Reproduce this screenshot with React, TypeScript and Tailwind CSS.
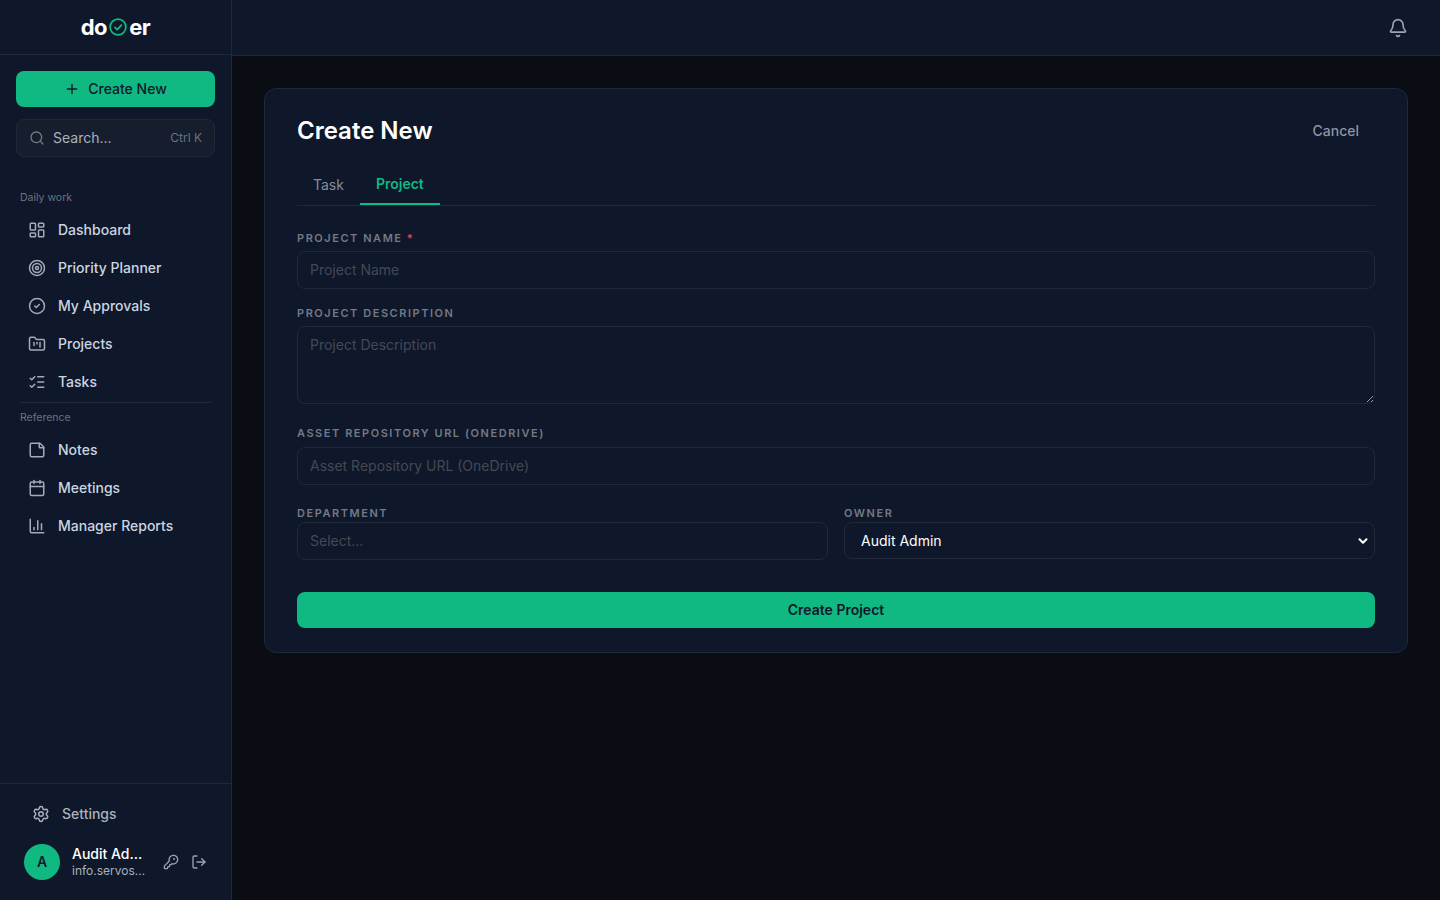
import { ReactNode } from "react";
import {
  Bell,
  Calendar,
  ChartColumn,
  ChevronDown,
  CircleCheck,
  FolderKanban,
  KeyRound,
  LayoutDashboard,
  ListChecks,
  LogOut,
  Plus,
  Search,
  Settings,
  StickyNote,
  Target,
} from "lucide-react";

const dailyWork = [
  { label: "Dashboard", icon: LayoutDashboard },
  { label: "Priority Planner", icon: Target },
  { label: "My Approvals", icon: CircleCheck },
  { label: "Projects", icon: FolderKanban },
  { label: "Tasks", icon: ListChecks },
];

const reference = [
  { label: "Notes", icon: StickyNote },
  { label: "Meetings", icon: Calendar },
  { label: "Manager Reports", icon: ChartColumn },
];

const NavItem = ({ label, icon: Icon }: { label: string; icon: typeof Bell }) => (
  <a className="flex h-[38px] items-center gap-[12px] rounded-lg px-[12px] text-sm font-medium text-[#cbd5e1]">
    <Icon className="h-[18px] w-[18px] shrink-0 text-[#a3abb8]" strokeWidth={2} />
    {label}
  </a>
);

const FieldLabel = ({ children }: { children: ReactNode }) => (
  <label className="block text-[11px] leading-[13px] font-semibold tracking-[0.14em] text-[#727a87] uppercase">
    {children}
  </label>
);

const inputClass =
  "block w-full rounded-lg border border-[#1f2937] bg-transparent pl-3 text-sm text-[#e5e7eb] outline-none placeholder:text-[#434a54]";

export default function App() {
  return (
    <div className="flex h-screen w-full overflow-hidden bg-[#0a0e14] font-['Inter',sans-serif]">
      <aside className="flex w-[232px] shrink-0 flex-col border-r border-[#1f2937] bg-[#0f172a]">
        <div className="flex h-[55px] shrink-0 items-center justify-center border-b border-[#1f2937] text-[22px] leading-none font-bold tracking-[-0.02em] text-white">
          <span>do</span>
          <svg viewBox="0 0 24 24" className="mx-[2px] h-[18px] w-[18px] text-[#10b981]" fill="none" stroke="currentColor" strokeWidth={2.4} strokeLinecap="round" strokeLinejoin="round">
            <circle cx="12" cy="12" r="10.5" />
            <path d="m8 12.5 3 3 5.5-6" />
          </svg>
          <span>er</span>
        </div>

        <div className="flex flex-col gap-3 px-4 pt-4">
          <button className="flex h-9 items-center justify-center gap-2 rounded-lg bg-[#10b981] text-sm font-medium text-[#0f172a]">
            <Plus className="h-4 w-4" />
            Create New
          </button>
          <div className="flex h-[38px] items-center rounded-lg border border-[#1f2937] bg-[#161e2e] px-3 text-sm text-[#a9b1bd]">
            <Search className="mr-2 h-4 w-4 text-[#727a87]" />
            <span>Search...</span>
            <span className="ml-auto text-xs text-[#6b7280]">Ctrl K</span>
          </div>
        </div>

        <nav className="flex-1 px-4 pt-[33px]">
          <p className="mb-[5px] px-1 text-[10.5px] leading-4 font-normal text-[#6b7280]">Daily work</p>
          {dailyWork.map((item) => (
            <NavItem key={item.label} {...item} />
          ))}
          <div className="mx-1 mt-[1px] mb-[7px] border-t border-[#1f2937]" />
          <p className="mb-[5px] px-1 text-[10.5px] leading-4 font-normal text-[#6b7280]">Reference</p>
          {reference.map((item) => (
            <NavItem key={item.label} {...item} />
          ))}
        </nav>

        <div className="border-t border-[#1f2937] px-6 pt-[14px] pb-[20px]">
          <a className="flex h-[32px] items-center gap-[12px] pl-[8px] text-sm font-medium text-[#a9b1bd]">
            <Settings className="h-[18px] w-[18px]" />
            Settings
          </a>
          <div className="mt-[14px] flex items-center">
            <div className="flex h-9 w-9 shrink-0 items-center justify-center rounded-full bg-[#10b981] text-sm font-semibold text-[#0f172a]">
              A
            </div>
            <div className="ml-3 w-[76px] min-w-0 pb-[2px]">
              <p className="truncate text-sm leading-[18px] font-medium text-white">Audit Admin</p>
              <p className="truncate text-xs leading-[15px] text-[#a9b1bd]">info.servosys@audit.com</p>
            </div>
            <KeyRound className="ml-[15px] h-4 w-4 shrink-0 text-[#9ca3af]" />
            <LogOut className="ml-3 h-4 w-4 shrink-0 text-[#9ca3af]" />
          </div>
        </div>
      </aside>

      <div className="flex min-w-0 flex-1 flex-col">
        <header className="flex h-14 shrink-0 items-center justify-end border-b border-[#1f2937] bg-[#0f172a] pr-[32px]">
          <Bell className="h-5 w-5 text-[#9ca3af]" />
        </header>

        <main className="flex-1 p-8">
          <div className="rounded-xl border border-[#1f2937] bg-[#0f172a] px-8 pt-[24px] pb-[24px]">
            <div className="flex items-center justify-between">
              <h1 className="text-2xl leading-9 font-semibold text-white">Create New</h1>
              <button className="px-4 text-sm font-medium text-[#8b95a5]">Cancel</button>
            </div>

            <div className="mt-4 flex h-[41px] items-start border-b border-[#1f2937]">
              <button className="h-10 px-4 text-sm text-[#858d9b]">Task</button>
              <button className="h-10 border-b-2 border-[#10b981] px-4 text-sm font-semibold text-[#10b981]">
                Project
              </button>
            </div>

            <div className="mt-[26px]">
              <FieldLabel>
                Project Name <span className="text-[#ef4444]">*</span>
              </FieldLabel>
              <input className={`${inputClass} mt-[6px] h-[38px] pb-[2px]`} placeholder="Project Name" />
            </div>

            <div className="mt-[18px]">
              <FieldLabel>Project Description</FieldLabel>
              <textarea className={`${inputClass} mt-[6px] h-[78px] py-2`} placeholder="Project Description" />
            </div>

            <div className="mt-[23px]">
              <FieldLabel>Asset Repository URL (OneDrive)</FieldLabel>
              <input className={`${inputClass} mt-[7px] h-[38px] pb-[2px]`} placeholder="Asset Repository URL (OneDrive)" />
            </div>

            <div className="mt-[22px] grid grid-cols-2 gap-4">
              <div>
                <FieldLabel>Department</FieldLabel>
                <input className={`${inputClass} mt-[2px] h-[38px] pb-[2px]`} placeholder="Select..." />
              </div>
              <div>
                <FieldLabel>Owner</FieldLabel>
                <div className="relative mt-[2px]">
                  <select className={`${inputClass} h-[37px] appearance-none pl-4 text-white`} defaultValue="Audit Admin">
                    <option>Audit Admin</option>
                  </select>
                  <ChevronDown className="pointer-events-none absolute top-1/2 right-[5px] h-[14px] w-[14px] -translate-y-1/2 text-white" strokeWidth={3.5} />
                </div>
              </div>
            </div>

            <button className="mt-[32px] flex h-9 w-full items-center justify-center rounded-lg bg-[#10b981] text-sm font-semibold text-[#0f172a]">
              Create Project
            </button>
          </div>
        </main>
      </div>
    </div>
  );
}
